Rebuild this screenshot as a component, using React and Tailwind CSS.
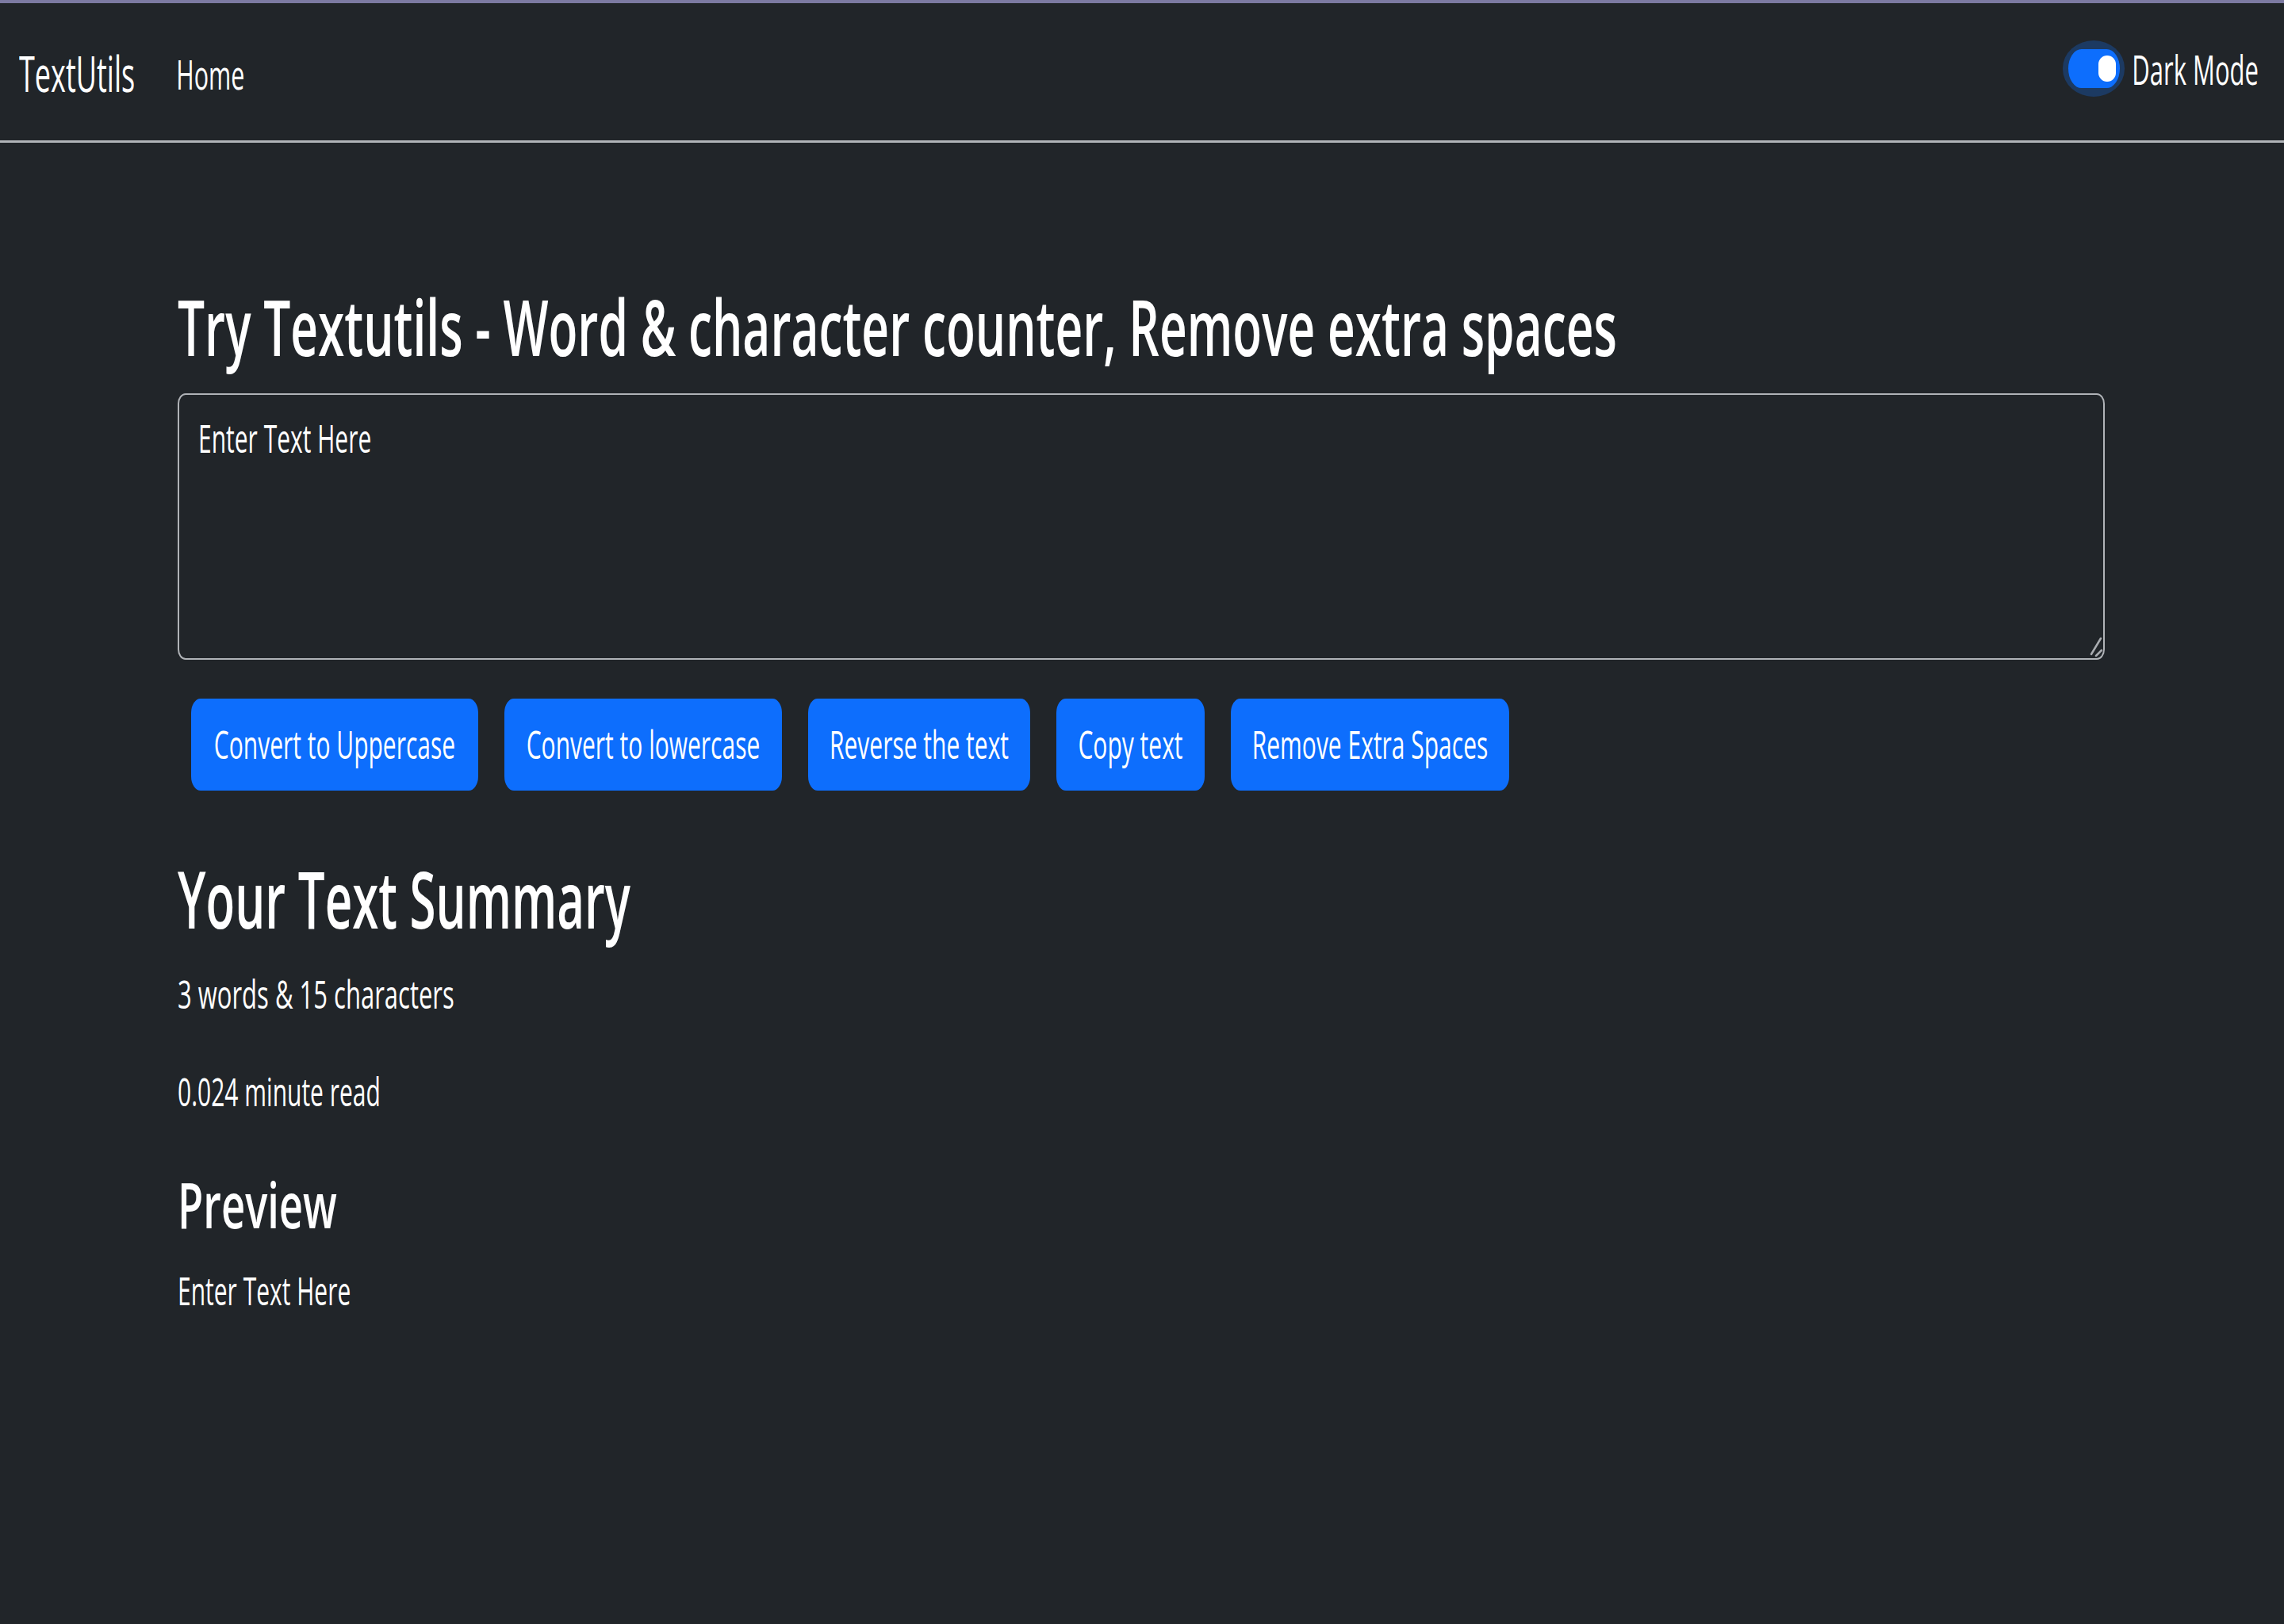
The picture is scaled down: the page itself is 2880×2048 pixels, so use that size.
import React from "react";

const buttons = [
  { label: "Convert to Uppercase", width: "w-[362px]" },
  { label: "Convert to lowercase", width: "w-[350px]" },
  { label: "Reverse the text", width: "w-[280px]" },
  { label: "Copy text", width: "w-[187px]" },
  { label: "Remove Extra Spaces", width: "w-[351px]" },
];

const Navbar = () => (
  <nav className="h-[176px] flex items-center justify-between border-b-[3px] border-[#b1b4b8] bg-[#212529]">
    <div className="flex items-center pl-[24px] mt-[4px]">
      <span className="inline-block text-[36px] leading-[50px] scale-y-[1.75]">TextUtils</span>
      <a href="#" className="ml-[52px] inline-block text-[30.5px] leading-[50px] scale-y-[1.66]">
        Home
      </a>
    </div>
    <div className="flex items-center pr-[32px] mb-[8px]">
      {/* switch, focused */}
      <span className="flex items-center justify-center w-[78px] h-[71px] rounded-[39px/35px] bg-[#1c3a62]">
        <span className="flex items-center justify-end w-[65px] h-[49px] rounded-[17px/25px] bg-[#0d6efd] pr-[5px]">
          <span className="w-[22px] h-[33px] rounded-full bg-white" />
        </span>
      </span>
      <span className="ml-[9px] inline-block text-[31px] leading-[50px] scale-y-[1.65]">Dark Mode</span>
    </div>
  </nav>
);

export default function App() {
  return (
    <div className="min-h-screen bg-[#212529] text-white font-['Open_Sans',sans-serif]">
      <div className="h-[4px] bg-[#7c7aa1]" />
      <Navbar />

      <main className="pl-[224px] w-[2654px] flex flex-col">
        <h1 className="mt-[182px] h-[100px] leading-[100px] text-[60.4px] font-semibold">
          <span className="inline-block scale-y-[1.63]">
            Try Textutils - Word &amp; character counter, Remove extra spaces
          </span>
        </h1>

        {/* text box */}
        <div className="relative mt-[34px] h-[336px] border-2 border-[#b0b3b7] rounded-[10px/13px] pl-[24px] pt-[30px]">
          <div className="h-[50px] leading-[50px] text-[30px]">
            <span className="inline-block scale-y-[1.65]">Enter Text Here</span>
          </div>
          <svg
            className="absolute right-[1px] bottom-[1px]"
            width="22"
            height="28"
            viewBox="0 0 22 28"
            fill="none"
          >
            <path d="M20 4 L8 24 M21 19 L14 26" stroke="#a9acb0" strokeWidth="2.5" strokeLinecap="round" />
          </svg>
        </div>

        <div className="mt-[49px] pl-[17px] flex gap-[33px]">
          {buttons.map((b) => (
            <button
              key={b.label}
              className={`${b.width} h-[116px] flex items-center justify-center rounded-[12px/18px] bg-[#0d6efd] text-white text-[30px] leading-[50px]`}
            >
              <span className="inline-block scale-y-[1.65]">{b.label}</span>
            </button>
          ))}
        </div>

        <h2 className="mt-[86px] h-[100px] leading-[100px] text-[60px] font-semibold">
          <span className="inline-block scale-y-[1.66]">Your Text Summary</span>
        </h2>
        <p className="mt-[45px] h-[50px] leading-[50px] text-[31px]">
          <span className="inline-block scale-y-[1.6]">3 words &amp; 15 characters</span>
        </p>
        <p className="mt-[74px] h-[50px] leading-[50px] text-[30px]">
          <span className="inline-block scale-y-[1.65]">0.024 minute read</span>
        </p>

        <h2 className="mt-[77px] h-[80px] leading-[80px] text-[52.5px] font-semibold">
          <span className="inline-block scale-y-[1.5]">Preview</span>
        </h2>
        <p className="mt-[44px] h-[50px] leading-[50px] text-[30px]">
          <span className="inline-block scale-y-[1.65]">Enter Text Here</span>
        </p>
      </main>
    </div>
  );
}
